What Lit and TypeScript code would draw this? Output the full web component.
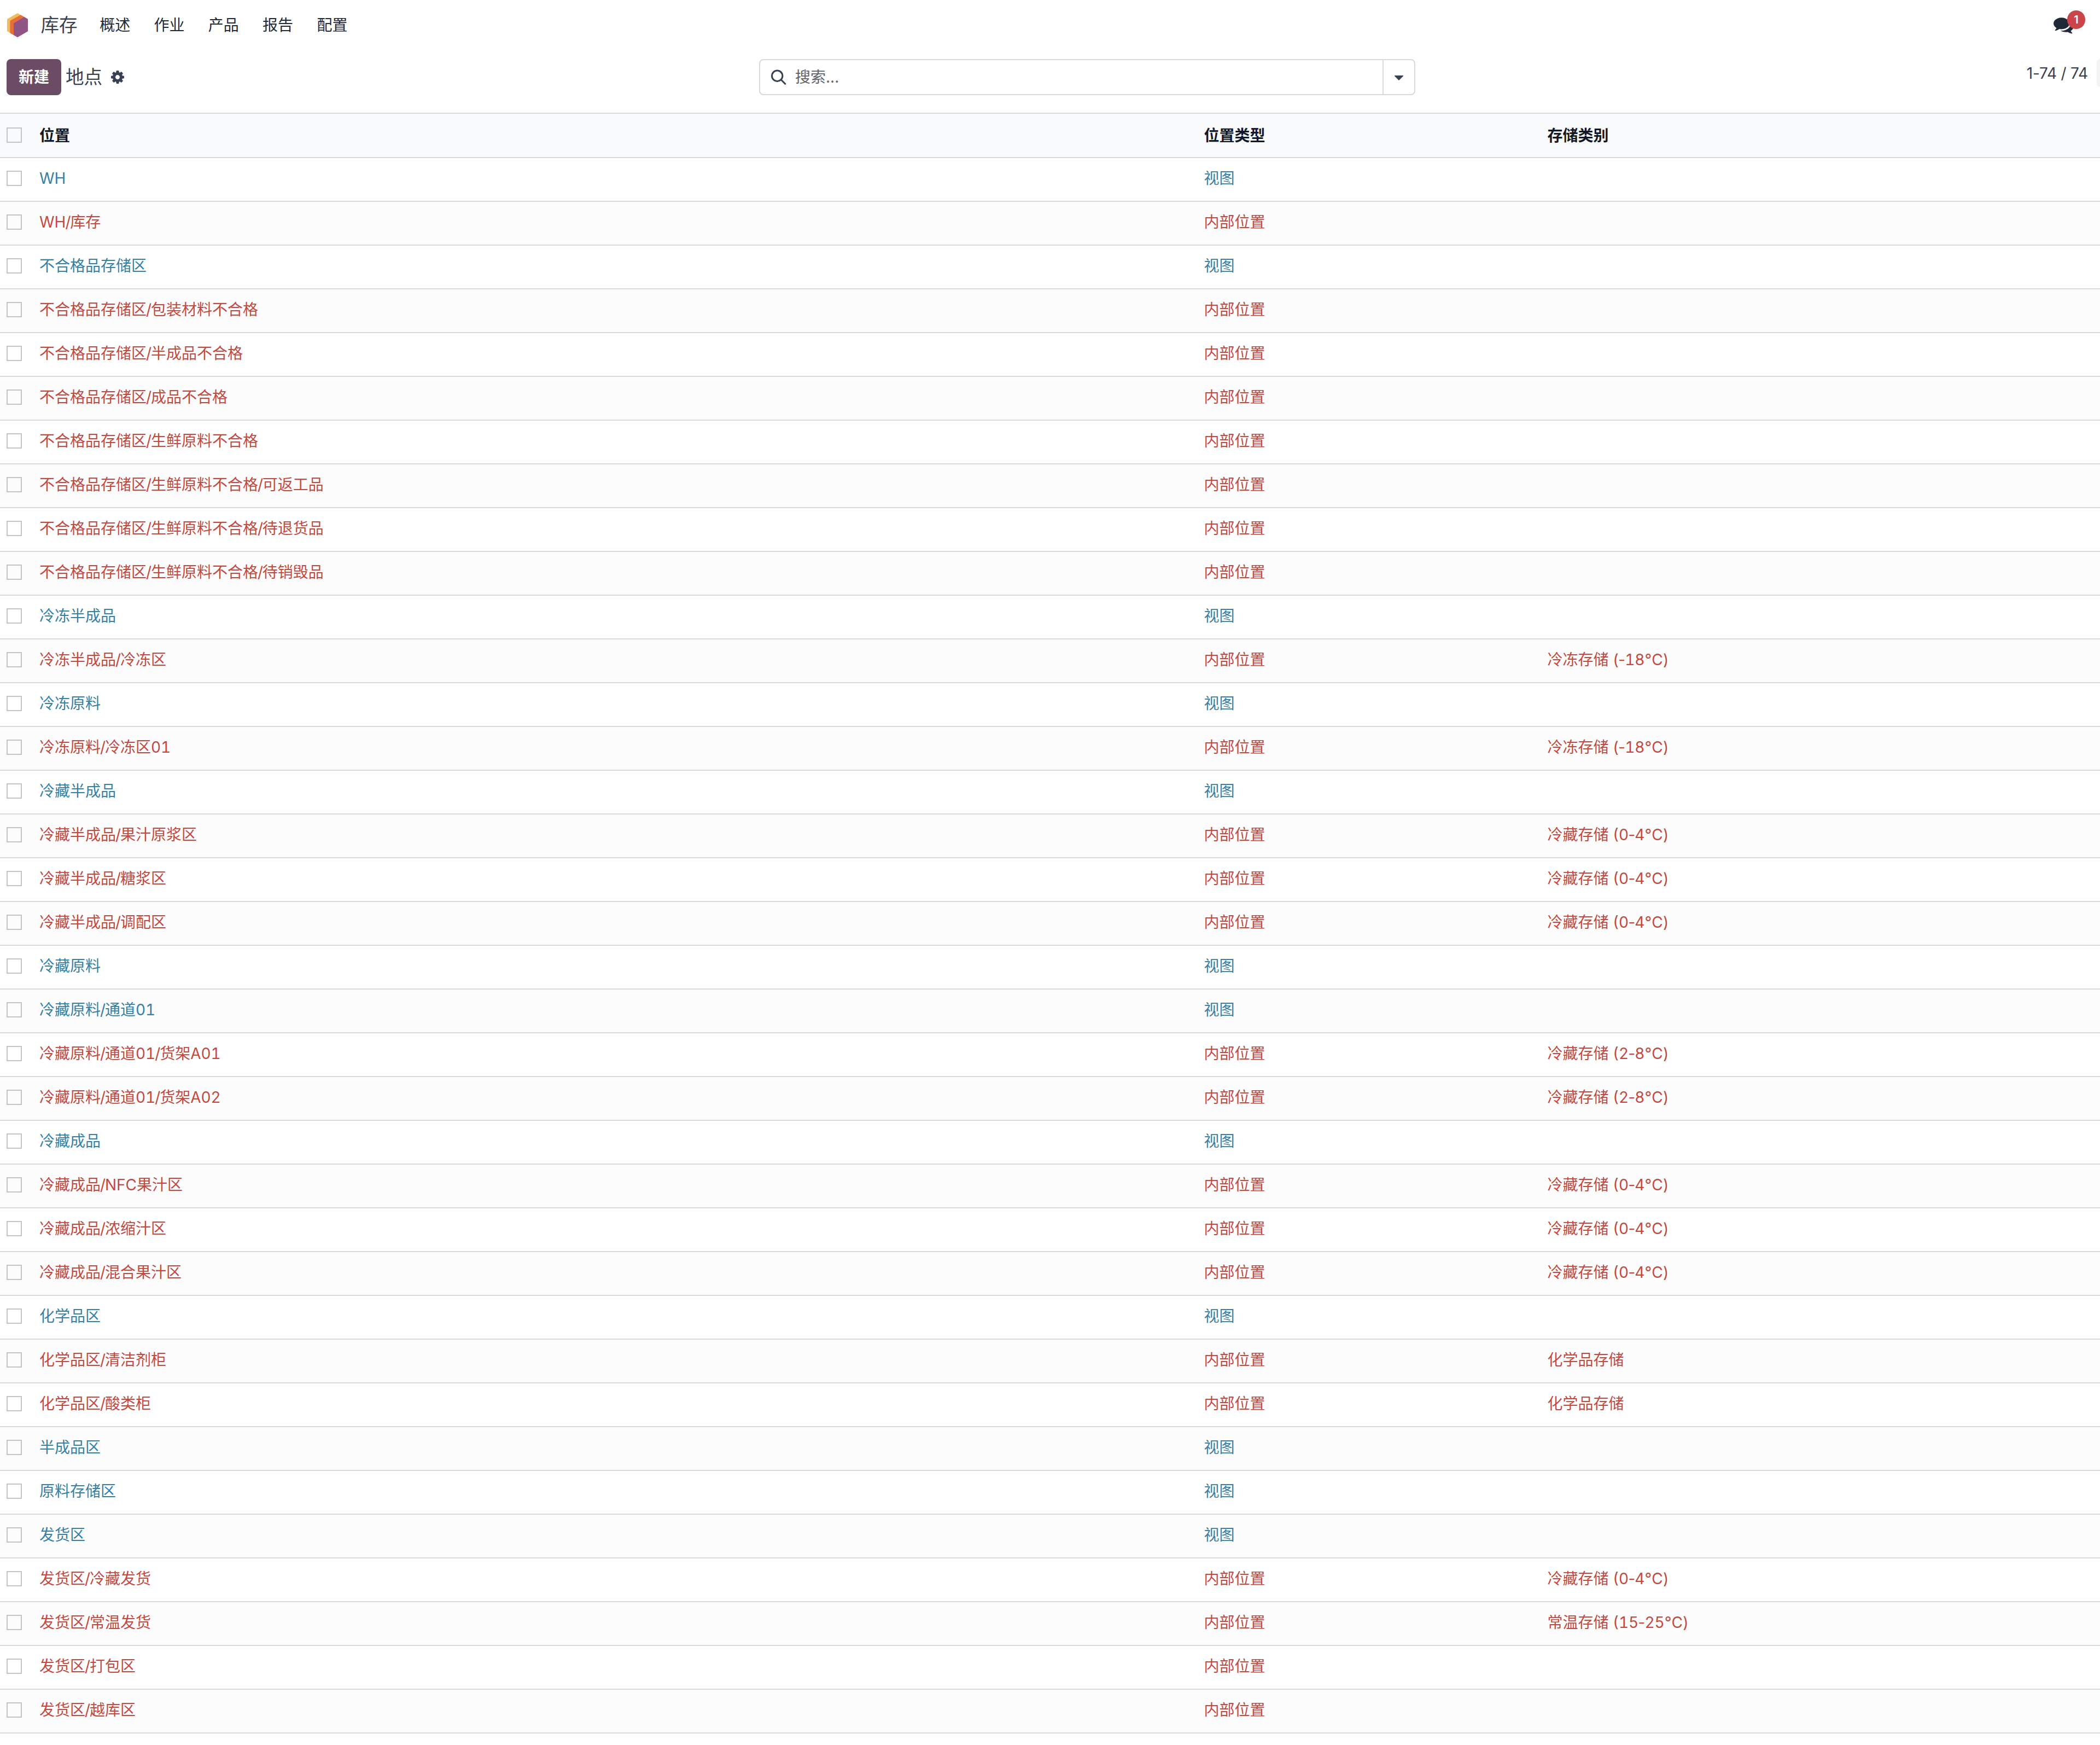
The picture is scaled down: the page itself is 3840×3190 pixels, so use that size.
import { LitElement, html, css, svg, nothing } from "lit";
import { customElement, property } from "lit/decorators.js";
import { classMap } from "lit/directives/class-map.js";

type Kind = "view" | "internal";
type Location = { name: string; kind: Kind; category?: string };

const FROZEN = "冷冻存储 (-18°C)";
const COLD = "冷藏存储 (0-4°C)";
const CHILL = "冷藏存储 (2-8°C)";
const AMBIENT = "常温存储 (15-25°C)";
const CHEMICAL = "化学品存储";

const view = (name: string): Location => ({ name, kind: "view" });
const internal = (name: string, category?: string): Location => ({ name, kind: "internal", category });

const LOCATIONS: Location[] = [
  view("WH"),
  internal("WH/库存"),
  view("不合格品存储区"),
  internal("不合格品存储区/包装材料不合格"),
  internal("不合格品存储区/半成品不合格"),
  internal("不合格品存储区/成品不合格"),
  internal("不合格品存储区/生鲜原料不合格"),
  internal("不合格品存储区/生鲜原料不合格/可返工品"),
  internal("不合格品存储区/生鲜原料不合格/待退货品"),
  internal("不合格品存储区/生鲜原料不合格/待销毁品"),
  view("冷冻半成品"),
  internal("冷冻半成品/冷冻区", FROZEN),
  view("冷冻原料"),
  internal("冷冻原料/冷冻区01", FROZEN),
  view("冷藏半成品"),
  internal("冷藏半成品/果汁原浆区", COLD),
  internal("冷藏半成品/糖浆区", COLD),
  internal("冷藏半成品/调配区", COLD),
  view("冷藏原料"),
  view("冷藏原料/通道01"),
  internal("冷藏原料/通道01/货架A01", CHILL),
  internal("冷藏原料/通道01/货架A02", CHILL),
  view("冷藏成品"),
  internal("冷藏成品/NFC果汁区", COLD),
  internal("冷藏成品/浓缩汁区", COLD),
  internal("冷藏成品/混合果汁区", COLD),
  view("化学品区"),
  internal("化学品区/清洁剂柜", CHEMICAL),
  internal("化学品区/酸类柜", CHEMICAL),
  view("半成品区"),
  view("原料存储区"),
  view("发货区"),
  internal("发货区/冷藏发货", COLD),
  internal("发货区/常温发货", AMBIENT),
  internal("发货区/打包区"),
  internal("发货区/越库区"),
];

const KIND_LABEL: Record<Kind, string> = { view: "视图", internal: "内部位置" };
const MENU = ["概述", "作业", "产品", "报告", "配置"];

const COG = svg`<path d="M1152 896q0-106-75-181t-181-75-181 75-75 181 75 181 181 75 181-75 75-181zm512-109v222q0 12-8 23t-20 13l-185 28q-19 54-39 91 35 50 107 138 10 12 10 25t-9 23q-27 37-99 108t-94 71q-12 0-26-9l-138-108q-44 23-91 38-16 136-29 186-7 28-36 28h-222q-14 0-24.5-8.5t-11.5-21.5l-28-184q-49-16-90-37l-141 107q-10 9-25 9-14 0-25-11-126-114-165-168-7-10-7-23 0-12 8-23 15-21 51-66.5t54-70.5q-27-50-41-99l-183-27q-13-2-21-12.5t-8-23.5v-222q0-12 8-23t19-13l186-28q14-46 39-92-40-57-107-138-10-12-10-24 0-10 9-23 26-36 98.5-107.5t94.5-71.5q13 0 26 10l138 107q44-23 91-38 16-136 29-186 7-28 36-28h222q14 0 24.5 8.5t11.5 21.5l28 184q49 16 90 37l142-107q9-9 24-9 13 0 25 10 129 119 165 170 7 8 7 22 0 12-8 23-15 21-51 66.5t-54 70.5q26 50 41 98l183 28q13 2 21 12.5t8 23.5z"/>`;
const COMMENTS = svg`<path d="M1408 768q0 139-94 257t-256.5 186.5-353.5 68.5q-86 0-176-16-124 88-278 128-36 9-86 16h-3q-11 0-20.5-8t-11.5-21q-1-3-1-6.5t.5-6.5 2-6l2.5-5 3.5-5.5 4-5 4.5-5 4-4.5q5-6 23-25t26-29.5 22.5-29 25-38.5 20.5-44q-124-72-195-177t-71-224q0-139 94-257t256.5-186.5 353.5-68.5 353.5 68.5 256.5 186.5 94 257zm384 256q0 120-71 224.5t-195 176.5q10 24 20.5 44t25 38.5 22.5 29 26 29.5 23 25q1 1 4 4.5t4.5 5 4 5 3.5 5.5l2.5 5 2 6 .5 6.5-1 6.5q-3 14-13 22t-22 7q-50-7-86-16-154-40-278-128-90 16-176 16-271 0-472-132 58 4 88 4 161 0 309-45t264-129q125-92 192-212t67-254q0-77-23-152 129 71 204 178t75 230z"/>`;

@customElement("top-bar")
class TopBar extends LitElement {
  static styles = css`
    :host { display: flex; height: 92px; align-items: center; padding: 0 27px 0 13px; box-sizing: border-box; color: #1f2937; }
    .logo { width: 38px; height: 44px; flex: none; }
    .app { margin-left: 23.5px; font-size: 33.6px; line-height: 42px; color: #374151; }
    .menu { display: flex; gap: 43.3px; margin-left: 40.5px; }
    .chat { position: relative; margin-left: auto; width: 58px; height: 92px; }
    .chat svg { display: block; width: 37px; height: 37px; margin-top: 27px; fill: #1f2937; }
    .badge { position: absolute; left: 25px; top: 19px; width: 33px; height: 34px; border-radius: 17px; background: #cb444a; color: #fff; font-size: 20px; font-weight: 600; line-height: 34px; text-align: center; }
  `;
  render() {
    return html`
      <svg class="logo" viewBox="39 72 114 131" preserveAspectRatio="none">
        <polygon fill="#f2bb5c" points="96,72 153,105 153,170 96,203 39,170 39,105"/>
        <polygon fill="#e66f3a" points="55,114 113,82 153,105 153,170 96,203 55,180"/>
        <polygon fill="#8f5685" points="75,127 132,93 153,105 153,170 96,203 75,191"/>
      </svg>
      <span class="app">库存</span>
      <nav class="menu">${MENU.map((m) => html`<span>${m}</span>`)}</nav>
      <div class="chat"><svg viewBox="0 0 1792 1792">${COMMENTS}</svg><span class="badge">1</span></div>
    `;
  }
}

@customElement("control-panel")
class ControlPanel extends LitElement {
  static styles = css`
    :host { display: grid; grid-template-columns: 1388px 1200px 1fr; height: 114px; padding-top: 16px; box-sizing: border-box; color: #374151; overflow: hidden; }
    .left { display: flex; align-items: center; height: 66px; padding-left: 12px; }
    .new { width: 100px; height: 66px; line-height: 66px; border-radius: 8px; background: #6b4c65; color: #fff; font-weight: 700; text-align: center; }
    .title { margin-left: 8px; font-size: 33.6px; line-height: 42px; }
    .cog { width: 28px; height: 28px; margin-left: 14px; fill: #374151; }
    .search { display: flex; align-items: center; height: 66px; box-sizing: border-box; border: 2px solid #d8dadd; border-radius: 8px; }
    .glass { width: 28px; height: 29px; margin-left: 20px; fill: none; stroke: #374151; stroke-width: 3; }
    .hint { flex: 1; margin-left: 16px; color: #5f636f; }
    .toggle { display: flex; align-items: center; justify-content: center; width: 56px; height: 62px; border-left: 2px solid #d8dadd; }
    .toggle svg { width: 16px; height: 9px; margin-top: 3px; fill: #374151; }
    .right { display: flex; justify-content: flex-end; }
    .pager { line-height: 42px; margin-top: 5px; margin-right: 16px; white-space: nowrap; letter-spacing: -0.2px; }
    .prev { width: 6px; height: 51px; border-radius: 8px 0 0 8px; background: #f3f4f6; }
  `;
  render() {
    return html`
      <div class="left">
        <span class="new">新建</span>
        <span class="title">地点</span>
        <svg class="cog" viewBox="0 0 1792 1792">${COG}</svg>
      </div>
      <div class="search">
        <svg class="glass" viewBox="0 0 28 29"><circle cx="11.2" cy="11.7" r="9.7"/><path d="M18 18.5l8.7 8.8"/></svg>
        <span class="hint">搜索...</span>
        <span class="toggle"><svg viewBox="0 0 16 9"><path d="M0 0h16v1L8 9 0 1z"/></svg></span>
      </div>
      <div class="right"><span class="pager">1-74 / 74</span><span class="prev"></span></div>
    `;
  }
}

@customElement("location-list")
class LocationList extends LitElement {
  @property({ attribute: false }) rows: Location[] = [];
  static styles = css`
    :host { display: block; border-top: 2px solid #d8dadd; font-variant-numeric: tabular-nums; }
    .row { display: grid; grid-template-columns: 72px 2129.5px 628px 1fr; align-items: center; height: 80px; box-sizing: border-box; border-bottom: 2px solid #d8dadd; padding-bottom: 4px; line-height: 42px; }
    .row:nth-child(odd) { background: #fcfcfc; }
    .row.head { height: 81px; padding-bottom: 0; background: #f9fafb; color: #111827; font-weight: 600; }
    .box { width: 28px; height: 28px; margin-left: 12px; box-sizing: border-box; border: 2px solid #c4c4c5; }
    .head .box { margin-bottom: 1px; }
    .sep { margin-left: -1px; letter-spacing: -1.2px; }
    .dash { margin-left: -3.5px; letter-spacing: -3.5px; }
    .view { color: #3580a4; }
    .internal { color: #c3493f; }
  `;

  /* Tightens the spacing around a separator so it sits snugly between its neighbours. */
  private tighten(text: string, mark: string, cls: string) {
    return text.split(mark).map((part, i) => (i ? html`<span class=${cls}>${mark}</span>${part}` : part));
  }

  render() {
    return html`
      <div class="row head"><span class="box"></span><span>位置</span><span>位置类型</span><span>存储类别</span></div>
      ${this.rows.map((r) => html`
        <div class=${classMap({ row: true, [r.kind]: true })}>
          <span class="box"></span><span>${this.tighten(r.name, "/", "sep")}</span><span>${KIND_LABEL[r.kind]}</span>
          ${r.category ? html`<span>${this.tighten(r.category, "-", "dash")}</span>` : nothing}
        </div>`)}
    `;
  }
}

@customElement("app-root")
class AppRoot extends LitElement {
  static styles = css`
    :host { display: block; width: 100%; height: 3190px; overflow: hidden; background: #fff; font: 400 28px/42px Inter, "Noto Sans CJK SC", sans-serif; }
  `;
  render() {
    return html`<top-bar></top-bar><control-panel></control-panel><location-list .rows=${LOCATIONS}></location-list>`;
  }
}
